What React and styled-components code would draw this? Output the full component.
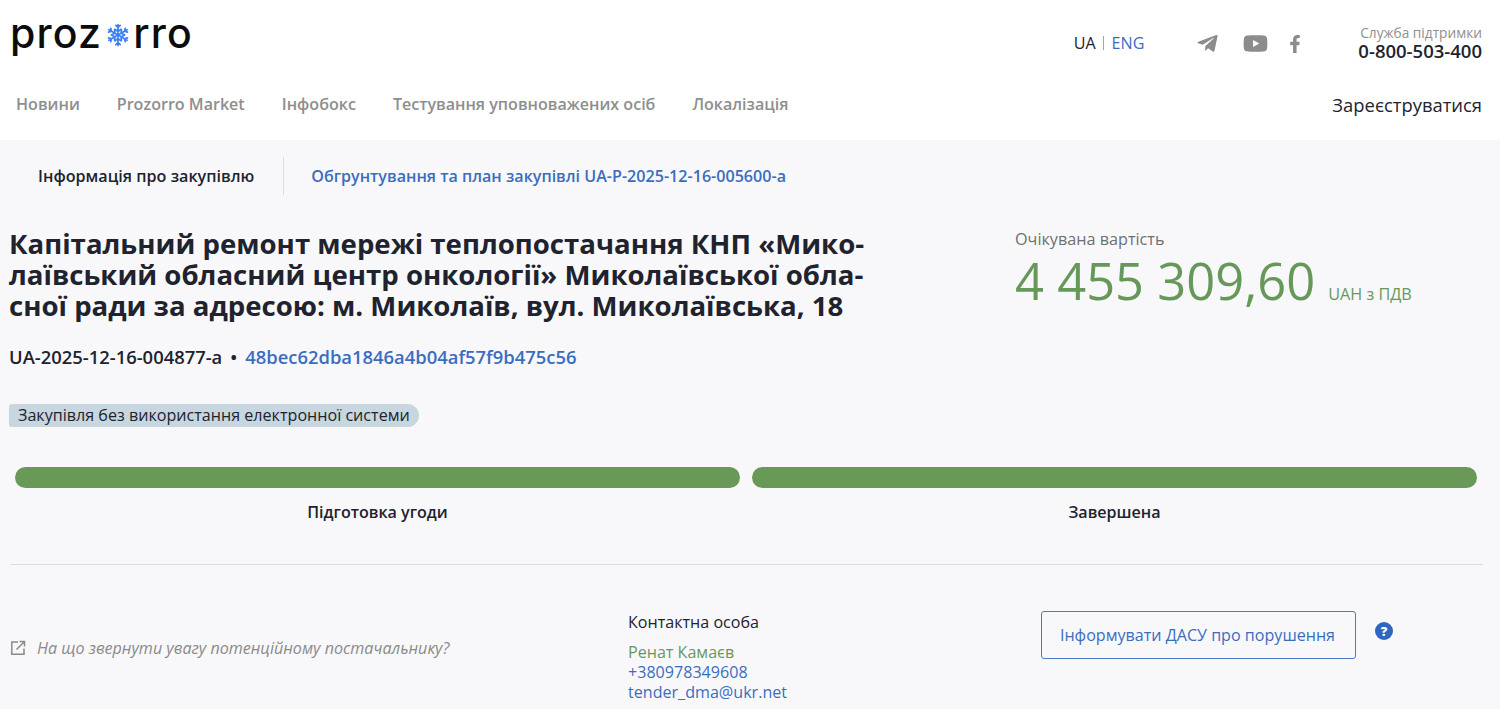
import React from 'react';
import styled, { createGlobalStyle } from 'styled-components';
import { FaTelegramPlane, FaYoutube, FaFacebookF } from 'react-icons/fa';

const GlobalStyle = createGlobalStyle`
  html, body { margin: 0; padding: 0; height: 709px; overflow: hidden; background: #f8f8fa; }
  * { box-sizing: border-box; }
  body { font-family: "Open Sans", "Noto Sans", sans-serif; color: #20232e; }
  a { text-decoration: none; color: inherit; }
`;

const Header = styled.header`
  background: #fff;
  height: 140px;
  padding: 0 18px 0 10px;
`;

const TopRow = styled.div`
  display: flex;
  align-items: flex-start;
  height: 83px;
`;

const Logo = styled.div`
  display: flex;
  align-items: center;
  height: 34px;
  margin-top: 16px;
  font-family: "Inter", sans-serif;
  font-size: 41px;
  font-weight: 500;
  line-height: 34px;
  letter-spacing: 1.2px;
  color: #0c0c0e;
`;

const Flake = styled.svg`
  width: 24px;
  height: 24px;
  margin: 4px 3px 0 4px;
  flex: none;
`;

const Lang = styled.div`
  display: flex;
  align-items: center;
  margin: 33px 0 0 auto;
  font-size: 16.1px;
  line-height: 20px;
`;

const LangSep = styled.span`
  width: 1px;
  height: 14px;
  margin: 0 8px 0 7px;
  background: #9fa6b2;
`;

const LangLink = styled.a`
  color: #3b6dbf;
`;

const Socials = styled.div`
  display: flex;
  align-items: center;
  margin: 31px 0 0 52px;
  color: #8c8c8c;
`;

const SocialLink = styled.a`
  display: flex;
  margin-left: ${p => p.$gap}px;
  font-size: ${p => p.$size}px;
`;

const Support = styled.div`
  margin: 24px 0 0 54px;
  text-align: right;
`;

const SupportLabel = styled.div`
  font-size: 13.7px;
  line-height: 18px;
  color: #8f8f8f;
`;

const SupportPhone = styled.div`
  font-size: 18.5px;
  line-height: 18px;
  font-weight: 600;
`;

const NavRow = styled.nav`
  display: flex;
  align-items: center;
  gap: 37px;
  padding-left: 6px;
  height: 42px;
`;

const NavLink = styled.a`
  font-size: 16.08px;
  font-weight: 600;
  color: #8e8e8e;
`;

const Register = styled.a`
  margin-left: auto;
  font-size: 18.4px;
  color: #20232e;
`;

const Main = styled.main`
  padding: 17px 17px 0 10px;
`;

const Tabs = styled.div`
  display: flex;
  align-items: center;
  height: 38px;
`;

const TabInfo = styled.div`
  display: flex;
  align-items: center;
  height: 38px;
  padding: 0 29px 0 28px;
  border-right: 1px solid #dcdee2;
  font-size: 16.15px;
  font-weight: 600;
`;

const TabLink = styled.a`
  margin-left: 27px;
  font-size: 16.1px;
  font-weight: 600;
  color: #3b6dbf;
`;

const Summary = styled.section`
  display: flex;
  margin: 32px 0 0 -1px;
`;

const TitleColumn = styled.div`
  width: 1006px;
`;

const Title = styled.h1`
  margin: 1px 0 0;
  font-size: 27.6px;
  line-height: 31px;
  font-weight: 700;
  color: #20232e;
`;

const Ids = styled.div`
  display: flex;
  align-items: center;
  margin-top: 23px;
  font-size: 18.4px;
  line-height: 26px;
  font-weight: 600;
`;

const Dot = styled.span`
  margin: 0 8px;
`;

const HashLink = styled.a`
  color: #3b6dbf;
`;

const Badge = styled.div`
  display: inline-block;
  margin-top: 34px;
  padding: 0 9px;
  height: 23px;
  border-radius: 3px 12px 12px 3px;
  background: #c8d6df;
  font-size: 16.13px;
  line-height: 23px;
`;

const PriceColumn = styled.div`
  padding-top: 1px;
`;

const PriceLabel = styled.div`
  font-size: 16.2px;
  line-height: 22px;
  color: #6f6f6f;
`;

const PriceRow = styled.div`
  display: flex;
  align-items: baseline;
  margin-top: 1px;
  color: #66985a;
`;

const PriceValue = styled.span`
  font-size: 50.7px;
  line-height: 60px;
`;

const PriceUnit = styled.span`
  margin-left: 13px;
  font-size: 16.2px;
`;

const Steps = styled.div`
  display: grid;
  grid-template-columns: 1fr 1fr;
  gap: 12px;
  margin-top: 40px;
  padding: 0 6px 0 5px;
`;

const Step = styled.div`
  text-align: center;
`;

const StepBar = styled.div`
  height: 21px;
  border-radius: 11px;
  background: #689957;
`;

const StepName = styled.div`
  margin-top: 13px;
  font-size: 16.1px;
  line-height: 22px;
  font-weight: 600;
`;

const Divider = styled.hr`
  margin: 41px 0 0;
  border: 0;
  border-top: 1px solid #dcdde0;
`;

const Bottom = styled.section`
  display: flex;
  align-items: flex-start;
  padding-top: 46px;
`;

const Notice = styled.a`
  display: flex;
  align-items: center;
  width: 618px;
  margin-top: 26px;
  font-size: 16.1px;
  line-height: 22px;
  font-style: italic;
  color: #8a8a8a;
`;

const NoticeIcon = styled.svg`
  width: 16px;
  height: 16px;
  margin-right: 11px;
  flex: none;
`;

const Contact = styled.div`
  width: 413px;
`;

const ContactTitle = styled.div`
  font-size: 16.1px;
  line-height: 22px;
  margin-bottom: 9px;
`;

const ContactLine = styled.div`
  font-size: 16.1px;
  line-height: 20px;
  color: ${p => p.$green ? '#66985a' : '#3b6dbf'};
`;

const ReportButton = styled.button`
  height: 48px;
  width: 315px;
  padding: 0 2px 0 0;
  border: 1px solid #4a7cc4;
  border-radius: 3px;
  background: transparent;
  font-family: inherit;
  font-size: 16.1px;
  color: #3b6dbf;
`;

const Help = styled.span`
  display: flex;
  align-items: center;
  justify-content: center;
  width: 18px;
  height: 18px;
  margin: 11px 0 0 19px;
  border-radius: 50%;
  background: #2f66c0;
  color: #fff;
  font-size: 13px;
  line-height: 18px;
  font-weight: 800;
`;

const navItems = ['Новини', 'Prozorro Market', 'Інфобокс', 'Тестування уповноважених осіб', 'Локалізація'];

// six arms of the snowflake in the logo
function Snowflake() {
  const arm = 'M12 12V1.5M12 4.5L9.8 2.3M12 4.5L14.2 2.3M12 8.5L9 6.3M12 8.5L15 6.3';
  return (
    <Flake viewBox="0 0 24 24" fill="none" stroke="#3d7ff0" strokeWidth="1.7" strokeLinecap="round">
      {[0, 60, 120, 180, 240, 300].map(a => (
        <path key={a} d={arm} transform={`rotate(${a} 12 12)`} />
      ))}
    </Flake>
  );
}

export default function App() {
  return (
    <>
      <GlobalStyle />
      <Header>
        <TopRow>
          <Logo>proz<Snowflake />rro</Logo>
          <Lang>
            UA<LangSep /><LangLink href="#">ENG</LangLink>
          </Lang>
          <Socials>
            <SocialLink href="#" $size={23} $gap={0}><FaTelegramPlane /></SocialLink>
            <SocialLink href="#" $size={25} $gap={24}><FaYoutube /></SocialLink>
            <SocialLink href="#" $size={18} $gap={18}><FaFacebookF /></SocialLink>
          </Socials>
          <Support>
            <SupportLabel>Служба підтримки</SupportLabel>
            <SupportPhone>0-800-503-400</SupportPhone>
          </Support>
        </TopRow>
        <NavRow>
          {navItems.map(item => <NavLink href="#" key={item}>{item}</NavLink>)}
          <Register href="#">Зареєструватися</Register>
        </NavRow>
      </Header>
      <Main>
        <Tabs>
          <TabInfo>Інформація про закупівлю</TabInfo>
          <TabLink href="#">Обгрунтування та план закупівлі UA-P-2025-12-16-005600-a</TabLink>
        </Tabs>
        <Summary>
          <TitleColumn>
            <Title>
              Капітальний ремонт мережі теплопостачання КНП «Мико-<br />
              лаївський обласний центр онкології» Миколаївської обла-<br />
              сної ради за адресою: м. Миколаїв, вул. Миколаївська, 18
            </Title>
            <Ids>
              UA-2025-12-16-004877-a<Dot>•</Dot>
              <HashLink href="#">48bec62dba1846a4b04af57f9b475c56</HashLink>
            </Ids>
            <Badge>Закупівля без використання електронної системи</Badge>
          </TitleColumn>
          <PriceColumn>
            <PriceLabel>Очікувана вартість</PriceLabel>
            <PriceRow>
              <PriceValue>4 455 309,60</PriceValue>
              <PriceUnit>UAH з ПДВ</PriceUnit>
            </PriceRow>
          </PriceColumn>
        </Summary>
        <Steps>
          <Step><StepBar /><StepName>Підготовка угоди</StepName></Step>
          <Step><StepBar /><StepName>Завершена</StepName></Step>
        </Steps>
        <Divider />
        <Bottom>
          <Notice href="#">
            <NoticeIcon viewBox="0 0 16 16" fill="none" stroke="currentColor" strokeWidth="1.5">
              <path d="M8 2H1.8v12.2H14V8.5" />
              <path d="M6.5 9.5L14 2M9.5 1.5h5v5" />
            </NoticeIcon>
            На що звернути увагу потенційному постачальнику?
          </Notice>
          <Contact>
            <ContactTitle>Контактна особа</ContactTitle>
            <ContactLine $green>Ренат Камаєв</ContactLine>
            <ContactLine>+380978349608</ContactLine>
            <ContactLine>tender_dma@ukr.net</ContactLine>
          </Contact>
          <ReportButton>Інформувати ДАСУ про порушення</ReportButton>
          <Help>?</Help>
        </Bottom>
      </Main>
    </>
  );
}
